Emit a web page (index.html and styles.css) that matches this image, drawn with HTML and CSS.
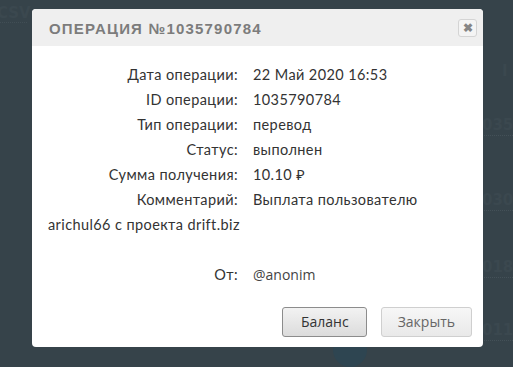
FILE: index.html
```html
<!DOCTYPE html>
<html>
<head lang="ru">
    <meta charset="UTF-8">
    <title>Операция</title>
    <link rel="stylesheet" href="styles.css">
</head>
<body>
<div class="page">
    <div class="page-top">CSV</div>
    <ul class="ids">
        <li class="id-head">I</li>
        <li>0357</li>
        <li>0305</li>
        <li>0180</li>
        <li>0116</li>
    </ul>
    <span class="dot"></span>
</div>

<div class="modal">
    <div class="modal-head">
        <h3>Операция №1035790784</h3>
        <span class="close">&#10006;</span>
    </div>

    <div class="modal-body">
        <p class="row"><span class="label">Дата операции:</span>22 Май 2020 16:53</p>
        <p class="row"><span class="label">ID операции:</span>1035790784</p>
        <p class="row"><span class="label">Тип операции:</span>перевод</p>
        <p class="row"><span class="label">Статус:</span>выполнен</p>
        <p class="row"><span class="label">Сумма получения:</span>10.10 &#8381;</p>
        <p class="row"><span class="label">Комментарий:</span>Выплата пользователю arichul66 с проекта drift.biz</p>
        <p class="row empty"></p>
        <p class="row"><span class="label">От:</span><span class="from">@anonim</span></p>
    </div>

    <div class="modal-foot">
        <span class="btn btn-dark">Баланс</span>
        <span class="btn">Закрыть</span>
    </div>
</div>
</body>
</html>
```

FILE: styles.css
```css
html, body, p, ul, li, h3 {
    padding: 0;
    margin: 0;
}

body {
    background: #36434a;
    font-family: 'Lato', 'Noto Sans', sans-serif;
    width: 513px;
    height: 367px;
    overflow: hidden;
    position: relative;
}

.page {
    height: 367px;
    color: #3b484f;
    font-family: 'DejaVu Sans', sans-serif;
    font-weight: bold;
}

.page-top {
    font-size: 15px;
    padding: 4px 0 0 0;
    margin-left: -3px;
    width: 30px;
    line-height: 18px;
    border-bottom: 1px dotted #414e55;
}

.ids {
    list-style: none;
    margin-left: 488px;
    padding-top: 38px;
    font-size: 15px;
}

.ids li {
    height: 20px;
    line-height: 20px;
    border-bottom: 1px dotted #445158;
    margin-left: -6px;
}

.ids .id-head {
    border: none;
    margin-left: 14px;
}

.ids li:nth-child(2) { margin-top: 34px; }
.ids li:nth-child(3) { margin-top: 54px; }
.ids li:nth-child(4) { margin-top: 46px; }
.ids li:nth-child(5) { margin-top: 42px; }

.dot {
    position: absolute;
    left: 333px;
    top: 333px;
    width: 34px;
    height: 34px;
    border-radius: 50%;
    background: #2e4551;
}

.modal {
    position: absolute;
    left: 32px;
    top: 9px;
    width: 451px;
    background: #fff;
    border-radius: 4px;
    overflow: hidden;
}

.modal-head {
    background: #efefef;
    height: 37px;
    display: flex;
    align-items: center;
    justify-content: space-between;
    padding: 0 6px 0 17px;
}

.modal-head h3 {
    font-family: 'Liberation Sans', sans-serif;
    font-size: 15px;
    font-weight: bold;
    letter-spacing: 1.2px;
    color: #7c7c7c;
    text-transform: uppercase;
    margin-top: 1px;
}

.close {
    width: 17px;
    height: 16px;
    border: 1px solid #d4d4d4;
    border-radius: 3px;
    background: #f4f4f4;
    color: #858585;
    font-size: 12px;
    line-height: 16px;
    text-align: center;
    font-weight: bold;
    margin-top: 1px;
}

.modal-body {
    padding: 16px 16px 0 16px;
    font-size: 14.5px;
    letter-spacing: 0.4px;
    color: #333;
}

.row {
    line-height: 25px;
    min-height: 25px;
}

.label {
    display: inline-block;
    width: 190px;
    text-align: right;
    margin-right: 15px;
}

.from {
    font-family: 'Open Sans', sans-serif;
    font-size: 14px;
    letter-spacing: 0;
    color: #444;
}

.modal-foot {
    display: flex;
    justify-content: flex-end;
    gap: 14px;
    padding: 20px 11px 10px 0;
}

.btn {
    display: block;
    height: 28px;
    line-height: 28px;
    padding: 0 16px;
    border: 1px solid #cfcfcf;
    border-radius: 3px;
    background: linear-gradient(#f7f7f7, #e9e9e9);
    font-family: 'Open Sans', sans-serif;
    font-size: 14px;
    color: #666;
}

.btn-dark {
    border-color: #8c8c8c;
    background: linear-gradient(#f2f2f2, #dcdcdc);
    color: #333;
    padding: 0 17px 0 18px;
}
```
